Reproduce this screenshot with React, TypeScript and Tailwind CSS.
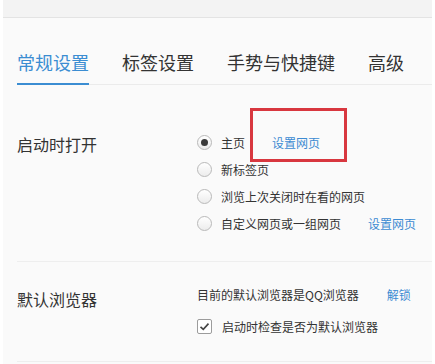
import React from 'react';

const font = { fontFamily: '"Noto Sans CJK SC", "Noto Sans", sans-serif' };

function Radio({ checked }: { checked?: boolean }) {
  return (
    <span className="flex h-[15px] w-[15px] shrink-0 items-center justify-center rounded-full border border-[#b9b9b9] bg-gradient-to-b from-white to-[#ececec]">
      {checked && <span className="h-[7px] w-[7px] rounded-full bg-[#3a3a3a]" />}
    </span>
  );
}

function RadioRow({ label, checked, link }: { label: string; checked?: boolean; link?: string }) {
  return (
    <div className="flex h-[27px] items-center">
      <Radio checked={checked} />
      <span className="ml-[9px] text-[12px] text-[#333]">{label}</span>
      {link && <span className="ml-[27px] text-[12px] text-[#3c8bd2]">{link}</span>}
    </div>
  );
}

export default function App() {
  const tabs = ['常规设置', '标签设置', '手势与快捷键', '高级'];

  return (
    <div className="relative h-[364px] w-[435px] overflow-hidden bg-white px-[3px]" style={font}>
      <div className="h-full bg-[#fafafa]">
        <div className="h-[18px] border-b border-[#e3e3e3] bg-[#f3f3f3]" />

        <div className="pl-[14px]">
          <div className="flex gap-[33px] border-b border-[#ebebeb] pt-[32px]">
            {tabs.map((t, i) => (
              <div
                key={t}
                className={
                  i === 0
                    ? '-mb-px border-b-2 border-[#3b8dd2] pb-[8px] text-[18px] leading-[24px] text-[#3b8dd2]'
                    : 'pb-[10px] text-[18px] leading-[24px] text-[#333]'
                }
              >
                {t}
              </div>
            ))}
          </div>

          <div className="flex border-b border-[#eeeeee] pt-[44px] pb-[24px]">
            <div className="w-[180px] pt-[2px] text-[16px] leading-[27px] text-[#333]">启动时打开</div>
            <div className="flex flex-col">
              <RadioRow label="主页" checked link="设置网页" />
              <RadioRow label="新标签页" />
              <RadioRow label="浏览上次关闭时在看的网页" />
              <RadioRow label="自定义网页或一组网页" link="设置网页" />
            </div>
          </div>

          <div className="flex border-b border-[#eeeeee] pt-[19px] pb-[21px]">
            <div className="w-[180px] pt-[5px] text-[16px] leading-[27px] text-[#333]">默认浏览器</div>
            <div className="flex flex-col gap-[5px]">
              <div className="flex h-[27px] items-center">
                <span className="text-[12px] text-[#333]">目前的默认浏览器是QQ浏览器</span>
                <span className="ml-[28px] text-[12px] text-[#3c8bd2]">解锁</span>
              </div>
              <div className="flex h-[27px] items-center">
                <span className="flex h-[15px] w-[15px] items-center justify-center rounded-[2px] border border-[#9c9c9c] bg-white">
                  <svg width="11" height="11" viewBox="0 0 11 11" fill="none">
                    <path d="M1.5 5.8 L4.3 8.4 L9.5 2.6" stroke="#444" strokeWidth="1.6" />
                  </svg>
                </span>
                <span className="ml-[10px] text-[12px] text-[#333]">启动时检查是否为默认浏览器</span>
              </div>
            </div>
          </div>
        </div>
      </div>

      <div className="absolute left-[250px] top-[108px] h-[54px] w-[97px] border-[3px] border-[#d8373f]" />
    </div>
  );
}
